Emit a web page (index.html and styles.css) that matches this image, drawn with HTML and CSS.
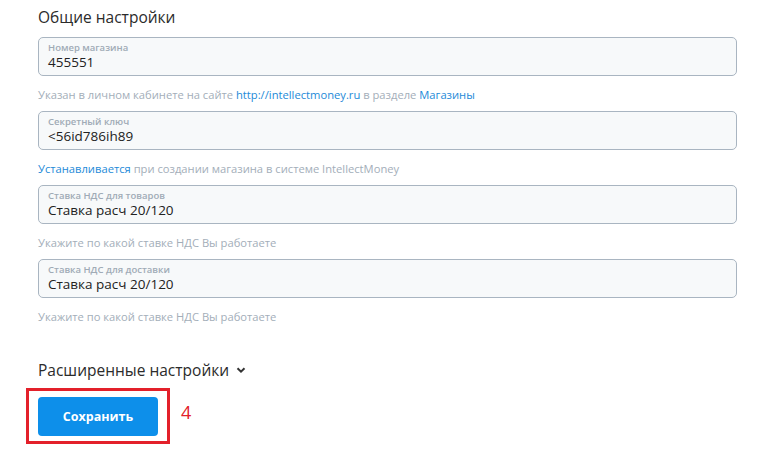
FILE: index.html
```html
<!DOCTYPE html>
<html lang="ru">
<head>
    <meta charset="UTF-8">
    <title>Настройки</title>
    <link rel="stylesheet" href="styles.css">
</head>
<body>

<main class="settings">
    <h2 class="section-title">Общие настройки</h2>

    <!-- Номер магазина -->
    <div class="field">
        <label class="field-box">
            <span class="field-label">Номер магазина</span>
            <span class="field-value">455551</span>
        </label>
        <p class="field-hint">Указан в личном кабинете на сайте <a href="#">http://intellectmoney.ru</a> в разделе <a href="#">Магазины</a></p>
    </div>

    <!-- Секретный ключ -->
    <div class="field">
        <label class="field-box">
            <span class="field-label">Секретный ключ</span>
            <span class="field-value">&lt;56id786ih89</span>
        </label>
        <p class="field-hint"><a href="#">Устанавливается</a> при создании магазина в системе IntellectMoney</p>
    </div>

    <div class="field">
        <label class="field-box">
            <span class="field-label">Ставка НДС для товаров</span>
            <span class="field-value">Ставка расч 20/120</span>
        </label>
        <p class="field-hint">Укажите по какой ставке НДС Вы работаете</p>
    </div>

    <div class="field">
        <label class="field-box">
            <span class="field-label">Ставка НДС для доставки</span>
            <span class="field-value">Ставка расч 20/120</span>
        </label>
        <p class="field-hint">Укажите по какой ставке НДС Вы работаете</p>
    </div>

    <h3 class="advanced">Расширенные настройки
        <svg class="chevron" width="10" height="8" viewBox="0 0 10 8"><path d="M1.5 2.2 L5 5.6 L8.5 2.2" fill="none" stroke="#333" stroke-width="2"/></svg>
    </h3>

    <div class="save-row">
        <div class="highlight">
            <button class="save-btn">Сохранить</button>
        </div>
        <span class="step">4</span>
    </div>
</main>

</body>
</html>
```

FILE: styles.css
```css
body {
    margin: 0;
    background: #fff;
    font-family: "Open Sans", "Noto Sans", sans-serif;
    color: #333;
}

.settings {
    padding: 5px 42px 0 38px;
}

.section-title {
    margin: 0 0 8px;
    font-size: 15.5px;
    font-weight: 400;
    line-height: 24px;
    color: #2b2b2b;
}

.field {
    margin-bottom: 7px;
}

.field-box {
    display: flex;
    flex-direction: column;
    height: 39px;
    box-sizing: border-box;
    padding: 4px 9px 0;
    background: #f7f9fa;
    border: 1px solid #a9b5c1;
    border-radius: 5px;
}

.field-label {
    font-size: 9.5px;
    line-height: 12px;
    font-weight: 600;
    color: #a0abb6;
}

.field-value {
    font-size: 13.5px;
    line-height: 17px;
    color: #222;
}

.field-hint {
    margin: 10px 0 0;
    font-size: 11.2px;
    line-height: 18px;
    color: #a3aeb9;
}

.field-hint a {
    color: #1d8ad8;
    text-decoration: none;
}

.advanced {
    display: flex;
    align-items: center;
    gap: 7px;
    margin: 33px 0 7px;
    font-size: 15.5px;
    font-weight: 400;
    line-height: 22px;
    color: #2b2b2b;
}

.save-row {
    display: flex;
    align-items: center;
    margin-left: -12px;
}

.highlight {
    padding: 6px 9px 5px;
    border: 3px solid #e3202a;
}

.save-btn {
    display: block;
    width: 120px;
    height: 39px;
    background: #0d8fea;
    color: #fff;
    border: none;
    border-radius: 4px;
    font-family: inherit;
    font-size: 12.5px;
    font-weight: 700;
    cursor: pointer;
}

.step {
    margin: -8px 0 0 11px;
    font-size: 18px;
    color: #e3202a;
}
```
